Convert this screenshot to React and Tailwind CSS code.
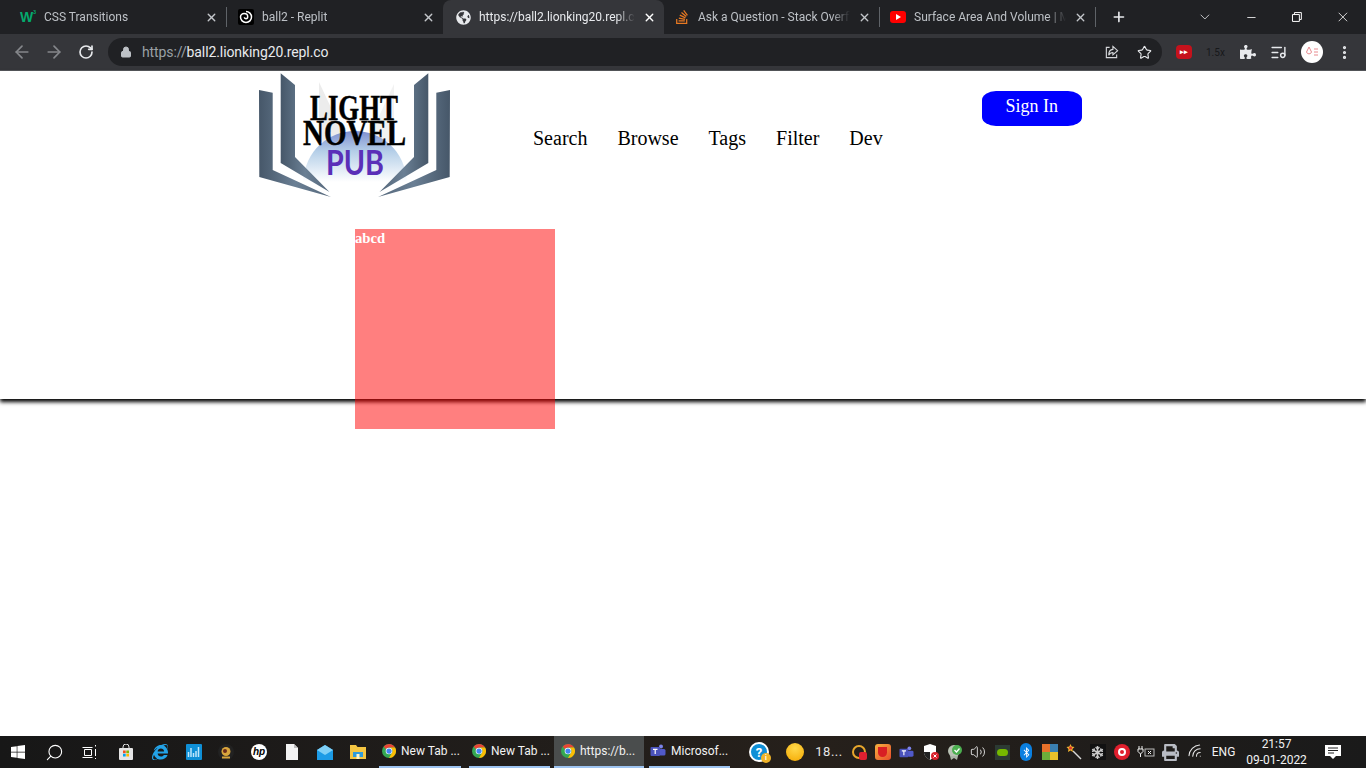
import React from 'react';
import { ArrowLeft, ArrowRight, RotateCw, Lock, Star, X, Plus, ChevronDown, Minus, EllipsisVertical, Search as SearchIcon, ListMusic, Volume2, Wifi } from 'lucide-react';
import { FaWindows, FaInternetExplorer, FaStackOverflow, FaBluetoothB, FaPuzzlePiece, FaGlobeAmericas, FaSnowflake, FaPrint } from 'react-icons/fa';

function ChromeIcon() {
  return (
    <svg width="14" height="14" viewBox="0 0 16 16" className="shrink-0">
      <circle cx="8" cy="8" r="8" fill="#34a853" />
      <path d="M8 0a8 8 0 0 1 6.93 4H8a4 4 0 0 0-3.46 2L2 2.9A8 8 0 0 1 8 0z" fill="#ea4335" />
      <path d="M14.93 4A8 8 0 0 1 8 16l3.46-6A4 4 0 0 0 8 4z" fill="#fbbc05" />
      <circle cx="8" cy="8" r="3.8" fill="#fff" />
      <circle cx="8" cy="8" r="3" fill="#4285f4" />
    </svg>
  );
}

function YoutubeIcon() {
  return (
    <div className="flex h-[12px] w-[16px] items-center justify-center rounded-[3px] bg-[#f00]">
      <div className="h-0 w-0 border-y-[3px] border-l-[5px] border-y-transparent border-l-white" />
    </div>
  );
}

function ReplitIcon() {
  return (
    <svg width="16" height="16" viewBox="0 0 16 16">
      <rect width="16" height="16" rx="2" fill="#000" />
      <path d="M8 2.5a5.5 5.5 0 1 1-5.5 5.5c0-2 1.6-3.4 3.6-3.4 2.2 0 3.6 1.4 3.6 3.1 0 1.2-.8 2-1.8 2-.9 0-1.5-.6-1.5-1.4" fill="none" stroke="#fff" strokeWidth="1.5" />
    </svg>
  );
}

function Tab({ icon, title, active, className = '' }) {
  return (
    <div className={`flex h-[34px] shrink-0 items-center ${active ? 'rounded-t-lg bg-[#35363a]' : ''} ${className}`}>
      <div className="flex w-4 shrink-0 items-center justify-center">{icon}</div>
      <span className={`ml-[8px] flex-1 overflow-hidden whitespace-nowrap text-[12px] [mask-image:linear-gradient(to_right,black_88%,transparent)] ${active ? 'text-[#e8eaed]' : 'text-[#bdc1c6]'}`}>
        {title}
      </span>
      <X size={13} strokeWidth={2.5} className={`mx-[8px] shrink-0 ${active ? 'text-white' : 'text-[#c4c7cb]'}`} />
    </div>
  );
}

function Separator() {
  return <div className="h-[20px] w-px shrink-0 bg-[#5f6368]" />;
}

function TabStrip() {
  return (
    <div className="flex h-[34px] items-center bg-[#202124] pl-[8px] pr-[15px] text-white">
      <Tab
        className="w-[218px] pl-[12px]"
        title="CSS Transitions"
        icon={
          <span className="flex items-start font-['Liberation_Sans'] font-bold leading-none text-[#04aa6d]">
            <span className="text-[14px]">W</span>
            <span className="text-[5px]">3</span>
          </span>
        }
      />
      <Separator />
      <Tab className="w-[216px] pl-[11px]" title="ball2 - Replit" icon={<ReplitIcon />} />
      <Tab
        active
        className="w-[221px] pl-[12px]"
        title="https://ball2.lionking20.repl.co"
        icon={<FaGlobeAmericas size={15} className="text-[#e8eaed]" />}
      />
      <Tab className="w-[215px] pl-[10px]" title="Ask a Question - Stack Overflow" icon={<FaStackOverflow size={16} className="text-[#e87922]" />} />
      <Separator />
      <Tab className="w-[215px] pl-[10px]" title="Surface Area And Volume | Maths" icon={<YoutubeIcon />} />
      <Separator />
      <Plus size={16} strokeWidth={2.5} className="ml-[15px] text-[#e8eaed]" />
      <ChevronDown size={16} strokeWidth={1.2} className="ml-[70px] text-[#e8eaed]" />
      <Minus size={13} strokeWidth={1.5} className="ml-[32px] text-white" />
      <svg width="12" height="12" viewBox="0 0 12 12" className="ml-[34px] text-white">
        <path d="M1.5 3.5h7v7h-7zM3.5 3.5V1.5h7v7h-2" fill="none" stroke="currentColor" />
      </svg>
      <X size={16} strokeWidth={1.2} className="ml-[32px] text-white" />
    </div>
  );
}

function Toolbar() {
  return (
    <div className="flex h-[37px] items-center border-b border-[#55575b] bg-[#35363a] pl-[12px]">
      <ArrowLeft size={20} className="text-[#85878b]" />
      <ArrowRight size={20} className="ml-[12px] text-[#85878b]" />
      <RotateCw size={16} strokeWidth={2.5} className="ml-[14px] text-[#e8eaed]" />
      <div className="ml-[14px] flex h-[28px] w-[1054px] items-center rounded-full bg-[#202124] pl-[12px] pr-[10px]">
        <Lock size={12} fill="currentColor" className="text-[#bdc1c6]" />
        <div className="ml-[10px] flex-1 text-[14px] tracking-[-0.1px] text-[#e8eaed]">
          <span className="text-[#9aa0a6]">https://</span>ball2.lionking20.repl.co
        </div>
        <svg width="15" height="15" viewBox="0 0 16 16" fill="none" stroke="#d5d7da" strokeWidth="1.2">
          <path d="M6 2.5H2.5v11h11V10" />
          <path d="M9.5 1.5 14.5 6l-5 4.5V8C7.5 8 6 9 5 11c0-3.5 1.5-6 4.5-6.3z" />
        </svg>
        <Star size={15} strokeWidth={1.8} className="ml-[18px] text-[#e8eaed]" />
      </div>
      <div className="ml-[14px] flex h-[14px] w-[16px] items-center justify-center rounded-[4px] bg-[#c5121c] text-[7px] font-bold leading-none text-white">
        ▸▸
      </div>
      <span className="ml-[14px] w-[20px] text-[10px] text-[#17181a]">1.5x</span>
      <FaPuzzlePiece size={16} className="ml-[14px] text-[#e8eaed]" />
      <ListMusic size={17} strokeWidth={2} className="ml-[14px] text-[#e8eaed]" />
      <div className="ml-[14px] flex h-[22px] w-[22px] items-center justify-center rounded-full bg-white">
        <svg width="14" height="12" viewBox="0 0 14 12" fill="none" stroke="#e88a8f" strokeWidth="1">
          <path d="M4 1 1.5 6a2.6 2.6 0 0 0 5 0zM9 3h4M9 6h4M9 9h4" />
        </svg>
      </div>
      <EllipsisVertical size={17} strokeWidth={2.5} className="ml-[13px] text-[#e8eaed]" />
    </div>
  );
}

function Logo() {
  const outer = '0,18 13.7,20.7 13.7,98 72,125 0.3,105';
  const inner = '21.7,1.3 36,13 36,85 70.5,120 21.7,91';
  return (
    <svg width="191" height="126" viewBox="0 0 191 126" className="shrink-0">
      <defs>
        <linearGradient id="bookLeft" x1="0" x2="1" y1="0" y2="0">
          <stop offset="0" stopColor="#465769" />
          <stop offset="0.5" stopColor="#6a7f94" />
          <stop offset="1" stopColor="#56687b" />
        </linearGradient>
        <linearGradient id="dome" x1="0" x2="0" y1="0" y2="1">
          <stop offset="0" stopColor="#7f8fd0" />
          <stop offset="0.4" stopColor="#b5cfe8" />
          <stop offset="1" stopColor="#ffffff" />
        </linearGradient>
      </defs>
      <polygon points="60,10 88,70 60,70" fill="#ececec" />
      <polygon points="135,12 108,70 135,70" fill="#f2f2f2" />
      <path d="M44 110C46 78 70 59 96 59s50 19 52 51z" fill="url(#dome)" />
      <polygon points={outer} fill="url(#bookLeft)" />
      <polygon points={inner} fill="url(#bookLeft)" />
      <g transform="matrix(-1 0 0 1 191 0)">
        <polygon points={outer} fill="url(#bookLeft)" />
        <polygon points={inner} fill="url(#bookLeft)" />
      </g>
      <text x="51" y="48" textLength="88" lengthAdjust="spacingAndGlyphs" fontFamily="Liberation Serif" fontWeight="700" fontSize="35" stroke="#000" strokeWidth="0.5" fill="#000">LIGHT</text>
      <text x="44" y="73" textLength="103" lengthAdjust="spacingAndGlyphs" fontFamily="Liberation Serif" fontWeight="700" fontSize="36" stroke="#000" strokeWidth="0.5" fill="#000">NOVEL</text>
      <text x="67" y="103" textLength="58" lengthAdjust="spacingAndGlyphs" fontFamily="Lato" fontWeight="700" fontSize="35" fill="#5a2fb8">PUB</text>
    </svg>
  );
}

function Page() {
  return (
    <div className="flex-1 bg-white font-['Liberation_Serif'] text-black">
      <div className="h-[328px] shadow-[0_3px_4px_#000]">
        <div className="flex items-start pl-[259px] pt-px">
          <Logo />
          <nav className="ml-[83px] mt-[53px] flex gap-[30px] text-[20px] leading-[26px]">
            <a>Search</a>
            <a>Browse</a>
            <a>Tags</a>
            <a>Filter</a>
            <a>Dev</a>
          </nav>
          <button className="ml-[99px] mt-[19px] h-[35px] w-[100px] rounded-[14px/9px] bg-[#00f] pb-[5px] text-[18px] text-white">
            Sign In
          </button>
        </div>
        <div className="ml-[355px] mt-[31px] h-[200px] w-[200px] bg-[#ff000080] text-[14.7px] font-bold leading-[18px] text-white">
          abcd
        </div>
      </div>
    </div>
  );
}

function Slot({ className = '', children }) {
  return <div className={`flex h-full shrink-0 items-center justify-center ${className}`}>{children}</div>;
}

function TaskButton({ icon, label, className = '', active }) {
  return (
    <div className={`flex h-full shrink-0 items-center gap-[5px] border-b-2 border-[#9dc3f0] text-[12px] text-[#f2f2f2] ${active ? 'bg-[#4a4d4d]' : ''} ${className}`}>
      {icon}
      <span className="whitespace-nowrap">{label}</span>
    </div>
  );
}

function TeamsIcon({ size = 16 }) {
  return (
    <svg width={size} height={size} viewBox="0 0 16 16">
      <circle cx="11" cy="3.5" r="2" fill="#7b83eb" />
      <rect x="9" y="6" width="6.5" height="6.5" rx="1.5" fill="#5059c9" />
      <rect x="0.5" y="4" width="9.5" height="9" rx="1" fill="#4b53bc" />
      <path d="M3 6.3h4.5M5.2 6.3V11" stroke="#fff" strokeWidth="1.2" />
    </svg>
  );
}

function Taskbar() {
  return (
    <div className="flex h-[32px] items-stretch bg-[linear-gradient(to_right,#171717,#1f1c1a_30%,#26201b_60%,#1a1a1a)] text-white">
      <Slot className="w-[36px]"><FaWindows size={16} className="text-white" /></Slot>
      <Slot className="w-[36px]"><SearchIcon size={19} strokeWidth={1.4} className="-scale-x-100 text-white" /></Slot>
      <Slot className="w-[36px]">
        <svg width="16" height="16" viewBox="0 0 16 16" fill="none" stroke="#fff">
          <path d="M.5 3.5h10M.5 13.5h10M2.5 5.5h7v6h-7zM13.5 1v1.500M13.5 5v7M13.500 14v1" />
        </svg>
      </Slot>
      <Slot className="w-[36px]">
        <svg width="16" height="16" viewBox="0 0 16 16">
          <path d="M5 4V3a3 3 0 0 1 6 0v1" fill="none" stroke="#e5e5e5" />
          <rect x="1" y="4" width="14" height="12" rx="1" fill="#e5e5e5" />
          <rect x="5" y="6.500" width="2.700" height="2.700" fill="#f25022" />
          <rect x="8.300" y="6.500" width="2.700" height="2.700" fill="#7fba00" />
          <rect x="5" y="9.800" width="2.700" height="2.700" fill="#00a4ef" />
          <rect x="8.300" y="9.800" width="2.700" height="2.700" fill="#ffb900" />
        </svg>
      </Slot>
      <Slot className="w-[32px]"><FaInternetExplorer size={16} className="text-[#23a3e8]" /></Slot>
      <Slot className="w-[36px]">
        <svg width="16" height="16" viewBox="0 0 16 16">
          <rect width="16" height="16" rx="1" fill="#0f8fd6" />
          <path d="M2.500 13V8M5 13V4M7.500 13V9M10 13V7M12.500 13V3" stroke="#bfe6fb" strokeWidth="1.500" />
        </svg>
      </Slot>
      <Slot className="w-[28px]">
        <svg width="16" height="16" viewBox="0 0 16 16">
          <circle cx="8" cy="8" r="8" fill="#222" />
          <circle cx="8" cy="7.500" r="4.500" fill="#d9a53c" />
          <circle cx="7" cy="7" r="2" fill="#6b2a1c" />
          <rect x="4" y="12.500" width="8" height="2" fill="#d9a53c" />
        </svg>
      </Slot>
      <Slot className="w-[38px]">
        <div className="flex h-[16px] w-[16px] items-center justify-center rounded-full bg-white font-['Liberation_Sans'] text-[10px] font-bold italic leading-none text-black">hp</div>
      </Slot>
      <Slot className="w-[28px]">
        <svg width="12" height="16" viewBox="0 0 12 16">
          <path d="M0 0h8l4 4v12H0z" fill="#f3f3f3" />
          <path d="M8 0l4 4H8z" fill="#bdbdbd" />
        </svg>
      </Slot>
      <Slot className="w-[38px]">
        <svg width="16" height="15" viewBox="0 0 16 15">
          <path d="M8 0 16 5v10H0V5z" fill="#1c9be6" />
          <path d="M0 5l8 5 8-5L8 0z" fill="#7fd0f7" />
        </svg>
      </Slot>
      <Slot className="w-[28px]">
        <svg width="16" height="14" viewBox="0 0 16 14">
          <path d="M0 0h6l1.500 2H16v12H0z" fill="#f4c542" />
          <rect x="3" y="7" width="10" height="5" fill="#2f9bdc" />
          <rect x="6.500" y="9" width="3" height="5" fill="#fff5c9" />
        </svg>
      </Slot>
      <TaskButton className="ml-[7px] w-[82px] pl-[3px]" icon={<ChromeIcon />} label="New Tab ..." />
      <TaskButton className="ml-[8px] w-[81px] pl-[3px]" icon={<ChromeIcon />} label="New Tab ..." />
      <TaskButton active className="ml-[4px] w-[90px] pl-[7px]" icon={<ChromeIcon />} label="https://b..." />
      <TaskButton className="ml-[5px] w-[81px] pl-px" icon={<TeamsIcon />} label="Microsof..." />
      <Slot className="ml-[14px] w-[30px]">
        <div className="relative flex h-[20px] w-[20px] items-center justify-center rounded-full border-2 border-white bg-[#0f8fd6] text-[13px] font-bold leading-none text-white">
          ?
          <div className="absolute -bottom-[3px] -right-[4px] flex h-[10px] w-[10px] items-center justify-center rounded-full bg-[#f0b429] text-[7px]">i</div>
        </div>
      </Slot>
      <Slot className="w-[42px]"><div className="h-[18px] w-[18px] rounded-full bg-[radial-gradient(circle_at_50%_30%,#ffd84a,#f5a800)]" /></Slot>
      <Slot className="w-[26px] text-[13px] tracking-[0.5px] text-[#e6e6e6]">18...</Slot>
      <div className="w-[5px] shrink-0" />
      <Slot className="w-[23.9px]">
        <div className="relative h-[14px] w-[14px] rounded-full border-2 border-[#e8a72c]">
          <div className="absolute -bottom-[3px] -right-[3px] h-[8px] w-[8px] rounded-[2px] bg-[#e02030]" />
        </div>
      </Slot>
      <Slot className="w-[23.9px]">
        <div className="flex h-[16px] w-[16px] items-center justify-center rounded-[3px] bg-[linear-gradient(135deg,#f5b340,#e84a2a)]">
          <div className="h-[10px] w-[9px] rounded-b-[5px] bg-[#d81e24]" />
        </div>
      </Slot>
      <Slot className="w-[23.9px]"><TeamsIcon size={15} /></Slot>
      <Slot className="w-[23.9px]">
        <svg width="16" height="16" viewBox="0 0 16 16">
          <path d="M7 0 13 2v6c0 4-3 6-6 8-3-2-6-4-6-8V2z" fill="#fff" />
          <path d="M7 0v16c-3-2-6-4-6-8h6z" fill="#222" />
          <circle cx="12" cy="12" r="4" fill="#d9202c" />
          <path d="M10.500 10.500l3 3M13.500 10.500l-3 3" stroke="#fff" />
        </svg>
      </Slot>
      <Slot className="w-[23.9px]">
        <svg width="16" height="16" viewBox="0 0 16 16">
          <circle cx="7" cy="7" r="6" fill="#b9c2b4" />
          <circle cx="10" cy="6" r="5" fill="#4caf50" />
          <path d="M7.500 6l2 2 3-3.500" fill="none" stroke="#fff" strokeWidth="1.300" />
          <path d="M3 12l1 4 3-2 3 2 1-4z" fill="#aab3a6" />
        </svg>
      </Slot>
      <Slot className="w-[23.9px]"><Volume2 size={16} strokeWidth={1.3} className="text-[#f2f2f2]" /></Slot>
      <Slot className="w-[23.9px]">
        <div className="flex h-[15px] w-[15px] items-center justify-center bg-[#2c3a33]">
          <div className="h-[7px] w-[11px] rounded-full bg-[#76b900]" />
        </div>
      </Slot>
      <Slot className="w-[23.9px]">
        <div className="flex h-[18px] w-[12px] items-center justify-center rounded-full bg-[#0a7fe0]">
          <FaBluetoothB size={11} className="text-white" />
        </div>
      </Slot>
      <Slot className="w-[23.9px]">
        <div className="grid h-[16px] w-[16px] grid-cols-2">
          <div className="bg-[#e8712a]" />
          <div className="bg-[#3a7fb0]" />
          <div className="bg-[#6dad3a]" />
          <div className="bg-[#e8c02a]" />
        </div>
      </Slot>
      <Slot className="w-[23.9px]">
        <svg width="16" height="16" viewBox="0 0 16 16">
          <path d="M7 7l8 8" stroke="#d8d8d8" strokeWidth="1.500" />
          <path d="M4.500 0l1.200 2.600L8.500 3 6.400 5l.5 3-2.400-1.400L2 8l.5-3L.5 3l2.800-.4z" fill="#f2b431" />
          <circle cx="4.500" cy="4" r="1.500" fill="#e0342b" />
        </svg>
      </Slot>
      <Slot className="w-[23.9px]">
        <div className="flex h-[16px] w-[16px] items-center justify-center bg-[#111]">
          <FaSnowflake size={13} className="text-[#c9c9c9]" />
        </div>
      </Slot>
      <Slot className="w-[23.9px]">
        <div className="flex h-[16px] w-[16px] items-center justify-center rounded-full bg-[#e01f2d]">
          <div className="h-[8px] w-[8px] rounded-full border-2 border-white" />
        </div>
      </Slot>
      <Slot className="w-[23.9px]">
        <svg width="18" height="14" viewBox="0 0 18 14" fill="none" stroke="#f2f2f2">
          <path d="M2 1v3M5 1v3M1 4h5v2.500L3.500 9 1 6.500zM3.500 9v3" />
          <rect x="8" y="4" width="9" height="7" stroke="#bcbcbc" />
          <path d="M11 6l3 3M14 6l-3 3" />
        </svg>
      </Slot>
      <Slot className="w-[26px]"><FaPrint size={17} className="text-[#b9bcc4]" /></Slot>
      <Slot className="w-[24px]"><Wifi size={18} strokeWidth={1.4} className="-rotate-45 text-[#e6e6e6]" /></Slot>
      <Slot className="w-[32px] text-[12px] text-[#f2f2f2]">ENG</Slot>
      <div className="flex w-[74px] shrink-0 flex-col items-center justify-center text-[12px] leading-[16px] text-[#f2f2f2]">
        <span>21:57</span>
        <span>09-01-2022</span>
      </div>
      <Slot className="w-[38px]">
        <svg width="16" height="16" viewBox="0 0 16 16">
          <path d="M0 1h16v11h-5l-3 3-3-3H0z" fill="#fff" />
          <path d="M3 4h10M3 6.500h10M3 9h6" stroke="#222" />
        </svg>
      </Slot>
    </div>
  );
}

export default function App() {
  return (
    <div className="flex h-screen w-full flex-col overflow-hidden font-['Roboto',sans-serif]">
      <TabStrip />
      <Toolbar />
      <Page />
      <Taskbar />
    </div>
  );
}
